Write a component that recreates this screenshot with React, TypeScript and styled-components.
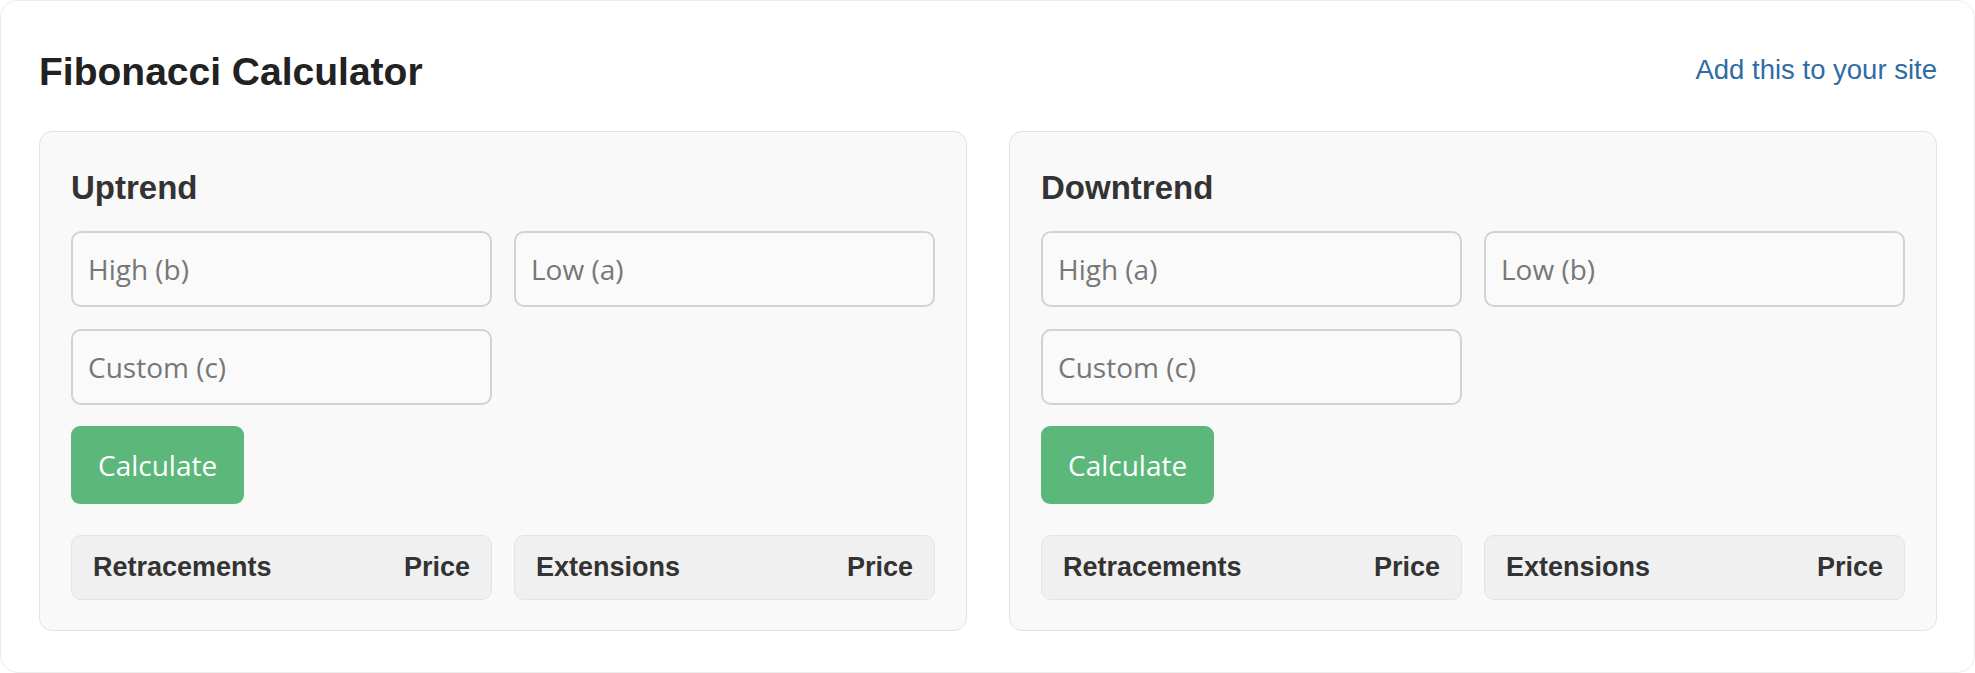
import React from "react";
import styled, { createGlobalStyle } from "styled-components";

const GlobalStyle = createGlobalStyle`
  html, body { margin: 0; padding: 0; background: #ffffff; }
  body { font-family: "Liberation Sans", Arial, sans-serif; }
  * { box-sizing: border-box; }
`;

const Widget = styled.div`
  width: 1975px;
  height: 673px;
  border: 1px solid #ececec;
  border-radius: 18px;
  background: #ffffff;
  padding: 48px 37px 0 38px;
`;

const Header = styled.header`
  display: flex;
  justify-content: space-between;
  align-items: center;
  height: 45px;
  margin-bottom: 37px;
`;

const Title = styled.h1`
  margin: 0;
  font-family: "Liberation Sans", Arial, sans-serif;
  font-weight: 700;
  font-size: 39px;
  line-height: 45px;
  color: #222222;
`;

const SiteLink = styled.a`
  font-family: "Liberation Sans", Arial, sans-serif;
  font-size: 27.5px;
  line-height: 45px;
  color: #2f6ca3;
  text-decoration: none;
  margin-top: -4px;
`;

const Columns = styled.div`
  display: grid;
  grid-template-columns: 1fr 1fr;
  column-gap: 42px;
`;

const Card = styled.section`
  background: #f9f9f9;
  border: 1px solid #e2e2e2;
  border-radius: 13px;
  padding: 31px 31px 30px;
`;

const CardTitle = styled.h2`
  margin: 0 0 18px;
  height: 50px;
  font-family: "Liberation Sans", Arial, sans-serif;
  font-weight: 700;
  font-size: 33px;
  line-height: 50px;
  color: #333333;
`;

const Fields = styled.div`
  display: grid;
  grid-template-columns: 1fr 1fr;
  gap: 22px;
`;

const Field = styled.input`
  height: 76px;
  width: 100%;
  padding: 0 15px;
  border: 2px solid #d2d2d2;
  border-radius: 10px;
  background: #fafafa;
  font-family: "Open Sans", sans-serif;
  font-size: 28px;
  color: #333333;
  outline: none;
  &::placeholder { color: #777777; opacity: 1; }
`;

const CalcButton = styled.button`
  margin-top: 21px;
  height: 78px;
  padding: 0 27px;
  border: none;
  border-radius: 9px;
  background: #5cb87a;
  color: #ffffff;
  font-family: "Open Sans", sans-serif;
  font-size: 28px;
  cursor: pointer;
`;

const Results = styled.div`
  margin-top: 31px;
  display: grid;
  grid-template-columns: 1fr 1fr;
  column-gap: 22px;
`;

const ResultTable = styled.table`
  width: 100%;
  height: 65px;
  border-collapse: separate;
  border-spacing: 0;
  background: #f0f0f0;
  border: 1px solid #e4e4e4;
  border-radius: 10px;
`;

const HeadCell = styled.th<{ $align: "left" | "right" }>`
  padding: 0 21px;
  text-align: ${(p) => p.$align};
  font-family: "Liberation Sans", Arial, sans-serif;
  font-weight: 700;
  font-size: 27px;
  color: #333333;
`;

type Trend = {
  title: string;
  high: string;
  low: string;
};

const trends: Trend[] = [
  { title: "Uptrend", high: "High (b)", low: "Low (a)" },
  { title: "Downtrend", high: "High (a)", low: "Low (b)" },
];

function ResultsTable({ label }: { label: string }) {
  return (
    <ResultTable>
      <thead>
        <tr>
          <HeadCell $align="left">{label}</HeadCell>
          <HeadCell $align="right">Price</HeadCell>
        </tr>
      </thead>
    </ResultTable>
  );
}

function TrendCard({ trend }: { trend: Trend }) {
  return (
    <Card>
      <CardTitle>{trend.title}</CardTitle>
      <Fields>
        <Field type="text" placeholder={trend.high} />
        <Field type="text" placeholder={trend.low} />
        <Field type="text" placeholder="Custom (c)" />
      </Fields>
      <CalcButton type="button">Calculate</CalcButton>
      <Results>
        <ResultsTable label="Retracements" />
        <ResultsTable label="Extensions" />
      </Results>
    </Card>
  );
}

export default function App() {
  return (
    <>
      <GlobalStyle />
      <Widget>
        <Header>
          <Title>Fibonacci Calculator</Title>
          <SiteLink href="#">Add this to your site</SiteLink>
        </Header>
        <Columns>
          {trends.map((t) => (
            <TrendCard key={t.title} trend={t} />
          ))}
        </Columns>
      </Widget>
    </>
  );
}
